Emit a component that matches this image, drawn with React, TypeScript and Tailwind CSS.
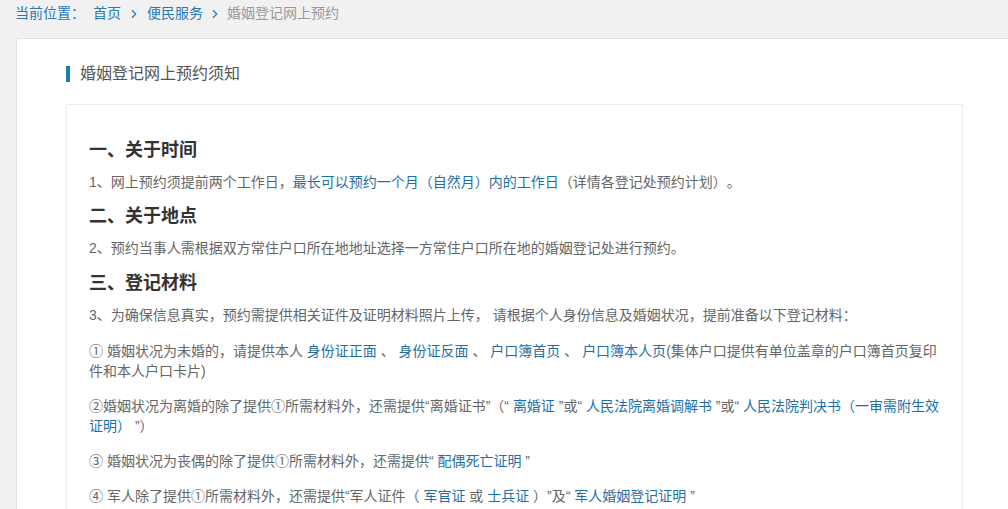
import { ChevronRight } from 'lucide-react'

const blue = 'text-[#1f6fa6]'

function App() {
  return (
    <div className="h-[509px] overflow-hidden bg-[#f1f1f1] font-['Liberation_Sans','Noto_Sans_CJK_SC',sans-serif] text-[14px] text-[#666] [text-spacing-trim:space-all]">
      {/* Breadcrumb */}
      <div className="flex h-[27px] items-center pl-[15px] text-[14px]">
        <span className="text-[#2a78b2]">当前位置：</span>
        <span className="ml-[8px] text-[#2a78b2]">首页</span>
        <ChevronRight className="mx-[6px] h-[14px] w-[14px] text-[#2a78b2]" strokeWidth={2} />
        <span className="text-[#2a78b2]">便民服务</span>
        <ChevronRight className="mx-[5px] h-[14px] w-[14px] text-[#2a78b2]" strokeWidth={2} />
        <span className="text-[#999]">婚姻登记网上预约</span>
      </div>

      {/* Panel */}
      <div className="ml-[16px] mt-[11px] w-[1010px] border border-[#e2e2e2] bg-white pl-[49px] pt-[27px]">
        <div className="flex h-[16px] items-center">
          <span className="h-[16px] w-[4px] bg-[#1a7ea8]" />
          <h2 className="ml-[10px] text-[16px] leading-[16px] text-[#555]">婚姻登记网上预约须知</h2>
        </div>

        <div className="mt-[22px] w-[897px] border border-[#ececec] pl-[22px] pt-[33px] pb-[40px]">
          <div className="w-[852px]">
            <h3 className="text-[18px] font-bold leading-[24px] text-[#333]">一、关于时间</h3>
            <p className="mt-[10px] leading-[20px]">
              1、网上预约须提前两个工作日，<span className={blue}>最长可以预约一个月（自然月）内的工作日</span>（详情各登记处预约计划）。
            </p>

            <h3 className="mt-[12px] text-[18px] font-bold leading-[24px] text-[#333]">二、关于地点</h3>
            <p className="mt-[10px] leading-[20px]">
              2、预约当事人需根据双方常住户口所在地地址选择一方常住户口所在地的婚姻登记处进行预约。
            </p>

            <h3 className="mt-[13px] text-[18px] font-bold leading-[24px] text-[#333]">三、登记材料</h3>
            <p className="mt-[10px] leading-[20px]">
              3、为确保信息真实，预约需提供相关证件及证明材料照片上传， 请根据个人身份信息及婚姻状况，提前准备以下登记材料：
            </p>

            <p className="mt-[16px] leading-[20px]">
              ① 婚姻状况为未婚的，请提供本人 <span className={blue}>身份证正面</span> 、 <span className={blue}>身份证反面</span> 、{' '}
              <span className={blue}>户口簿首页</span> 、 <span className={blue}>户口簿本人页</span>(集体户口提供有单位盖章的户口簿首页复印件和本人户口卡片)
            </p>

            <p className="mt-[15px] leading-[20px]">
              ②婚姻状况为离婚的除了提供①所需材料外，还需提供“离婚证书”（“ <span className={blue}>离婚证</span> ”或“{' '}
              <span className={blue}>人民法院离婚调解书</span> ”或“ <span className={blue}>人民法院判决书（一审需附生效证明）</span> ”）
            </p>

            <p className="mt-[15px] leading-[20px]">
              ③ 婚姻状况为丧偶的除了提供①所需材料外，还需提供“ <span className={blue}>配偶死亡证明</span> ”
            </p>

            <p className="mt-[15px] leading-[20px]">
              ④ 军人除了提供①所需材料外，还需提供“军人证件（ <span className={blue}>军官证</span> 或 <span className={blue}>士兵证</span> ）”及“{' '}
              <span className={blue}>军人婚姻登记证明</span> ”
            </p>
          </div>
        </div>
      </div>
    </div>
  )
}

export default App
